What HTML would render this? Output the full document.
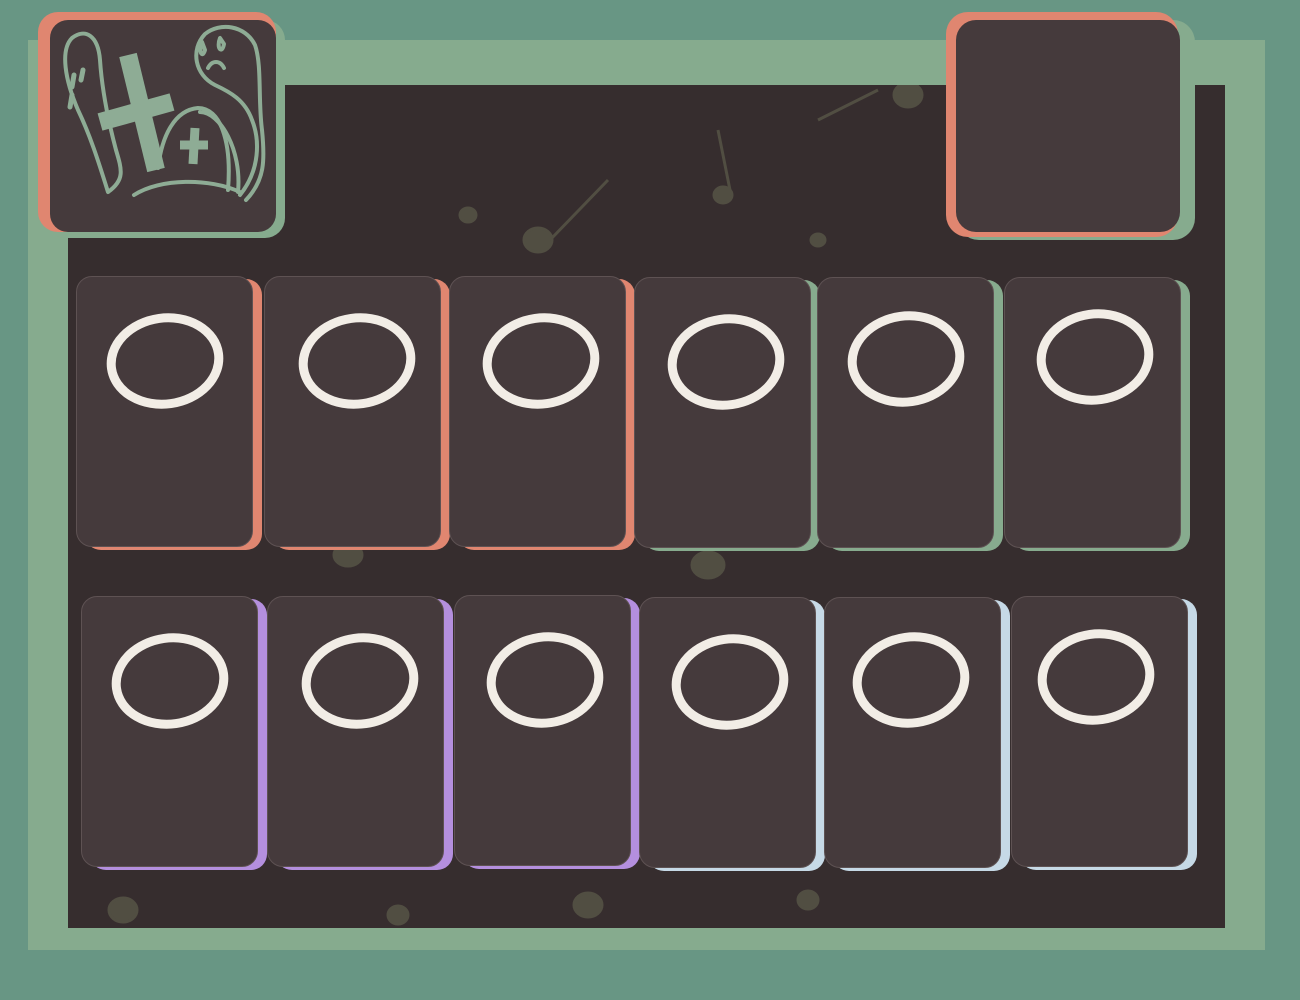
<!DOCTYPE html>
<html><head><style>
html,body{margin:0;padding:0}
body{width:1300px;height:1000px;background:#689684;position:relative;overflow:hidden;font-family:"Liberation Sans",sans-serif}
.abs{position:absolute}
.card{position:absolute;width:177px;height:271px;background:#453a3c;border-radius:16px;box-shadow:9px 3px 0 var(--c);border:1px solid #5e5253;box-sizing:border-box}
.card svg{position:absolute;left:22px;top:30px;overflow:visible}
</style></head><body>
<div class="abs" style="left:28px;top:40px;width:1237px;height:910px;background:#86ab8e"></div>
<div class="abs" style="left:68px;top:85px;width:1157px;height:843px;background:#362d2e"></div>
<svg class="abs" style="left:68px;top:85px" width="1157" height="843">
<g fill="#5d5c4b" stroke="#5d5c4b" stroke-width="3" opacity=".7">
<ellipse cx="470" cy="155" rx="14" ry="12"/><line x1="482" y1="155" x2="540" y2="95"/>
<ellipse cx="655" cy="110" rx="9" ry="8"/><line x1="663" y1="110" x2="650" y2="45"/>
<ellipse cx="750" cy="155" rx="7" ry="6"/><ellipse cx="840" cy="10" rx="14" ry="12"/>
<line x1="750" y1="35" x2="810" y2="5"/><ellipse cx="640" cy="480" rx="16" ry="13"/>
<ellipse cx="55" cy="825" rx="14" ry="12"/><ellipse cx="520" cy="820" rx="14" ry="12"/>
<ellipse cx="330" cy="830" rx="10" ry="9"/><ellipse cx="740" cy="815" rx="10" ry="9"/>
<ellipse cx="400" cy="130" rx="8" ry="7"/><ellipse cx="280" cy="470" rx="14" ry="11"/>
</g></svg>
<!-- top left icon -->
<div class="abs" style="left:45px;top:20px;width:240px;height:218px;background:#86ab8e;border-radius:20px"></div>
<div class="abs" style="left:38px;top:12px;width:238px;height:220px;background:#e08670;border-radius:20px"></div>
<div class="abs" style="left:50px;top:20px;width:226px;height:212px;background:#453a3c;border-radius:18px"></div>
<svg class="abs" style="left:50px;top:20px" width="226" height="212" fill="none" stroke="#8eac95" stroke-width="4" stroke-linecap="round" stroke-linejoin="round">
<path d="M58 172 C48 140 40 115 28 90 C15 60 10 30 22 18 C35 8 48 15 50 40 C52 70 58 100 66 130 C72 150 75 160 58 172"/>
<path d="M24 55 l-2 12 M33 50 l-2 10 M22 75 l-2 12" stroke-width="5"/>
<path d="M50 102 L122 82" stroke-width="18" stroke-linecap="butt"/>
<path d="M78 35 L106 150" stroke-width="18" stroke-linecap="butt"/>
<path d="M84 175 C110 158 160 158 190 172"/>
<path d="M108 148 C112 115 125 90 148 88 C170 88 182 120 178 170"/>
<path d="M150 92 C170 92 192 130 188 172"/>
<path d="M130 125 l28 0" stroke-width="9" stroke-linecap="butt"/>
<path d="M145 108 l-2 36" stroke-width="9" stroke-linecap="butt"/>
<path d="M190 175 C210 150 210 120 202 100 C195 80 180 72 165 65 C145 55 140 30 155 14 C170 2 195 5 205 25 C212 45 208 80 212 110 C215 140 215 160 196 180"/>
<path d="M152 22 C148 30 152 40 155 30 Z M170 18 C166 28 172 35 174 24 Z" stroke-width="4"/>
<path d="M158 48 c4-8 12-8 16 0"/>
</svg>
<!-- top right -->
<div class="abs" style="left:957px;top:20px;width:238px;height:220px;background:#86ab8e;border-radius:22px"></div>
<div class="abs" style="left:946px;top:12px;width:232px;height:225px;background:#e08670;border-radius:22px"></div>
<div class="abs" style="left:956px;top:20px;width:224px;height:212px;background:#453a3c;border-radius:20px"></div>

<div class="card" style="left:76px;top:276px;--c:#e08670"><svg width="130" height="110"><ellipse cx="66" cy="54" rx="54" ry="43" transform="rotate(-8 66 54)" fill="none" stroke="#f2ede6" stroke-width="9"/></svg></div>
<div class="card" style="left:264px;top:276px;--c:#e08670"><svg width="130" height="110"><ellipse cx="70" cy="54" rx="54" ry="43" transform="rotate(-8 70 54)" fill="none" stroke="#f2ede6" stroke-width="9"/></svg></div>
<div class="card" style="left:449px;top:276px;--c:#e08670"><svg width="130" height="110"><ellipse cx="69" cy="54" rx="54" ry="43" transform="rotate(-8 69 54)" fill="none" stroke="#f2ede6" stroke-width="9"/></svg></div>
<div class="card" style="left:634px;top:277px;--c:#87ab8e"><svg width="130" height="110"><ellipse cx="69" cy="54" rx="54" ry="43" transform="rotate(-8 69 54)" fill="none" stroke="#f2ede6" stroke-width="9"/></svg></div>
<div class="card" style="left:817px;top:277px;--c:#87ab8e"><svg width="130" height="110"><ellipse cx="66" cy="51" rx="54" ry="43" transform="rotate(-8 66 51)" fill="none" stroke="#f2ede6" stroke-width="9"/></svg></div>
<div class="card" style="left:1004px;top:277px;--c:#87ab8e"><svg width="130" height="110"><ellipse cx="68" cy="49" rx="54" ry="43" transform="rotate(-8 68 49)" fill="none" stroke="#f2ede6" stroke-width="9"/></svg></div>

<div class="card" style="left:81px;top:596px;--c:#b48fde"><svg width="130" height="110"><ellipse cx="66" cy="54" rx="54" ry="43" transform="rotate(-8 66 54)" fill="none" stroke="#f2ede6" stroke-width="9"/></svg></div>
<div class="card" style="left:267px;top:596px;--c:#b48fde"><svg width="130" height="110"><ellipse cx="70" cy="54" rx="54" ry="43" transform="rotate(-8 70 54)" fill="none" stroke="#f2ede6" stroke-width="9"/></svg></div>
<div class="card" style="left:454px;top:595px;--c:#b48fde"><svg width="130" height="110"><ellipse cx="68" cy="54" rx="54" ry="43" transform="rotate(-8 68 54)" fill="none" stroke="#f2ede6" stroke-width="9"/></svg></div>
<div class="card" style="left:639px;top:597px;--c:#c6d9e6"><svg width="130" height="110"><ellipse cx="68" cy="54" rx="54" ry="43" transform="rotate(-8 68 54)" fill="none" stroke="#f2ede6" stroke-width="9"/></svg></div>
<div class="card" style="left:824px;top:597px;--c:#c6d9e6"><svg width="130" height="110"><ellipse cx="64" cy="52" rx="54" ry="43" transform="rotate(-8 64 52)" fill="none" stroke="#f2ede6" stroke-width="9"/></svg></div>
<div class="card" style="left:1011px;top:596px;--c:#c6d9e6"><svg width="130" height="110"><ellipse cx="62" cy="50" rx="54" ry="43" transform="rotate(-8 62 50)" fill="none" stroke="#f2ede6" stroke-width="9"/></svg></div>
</body></html>
